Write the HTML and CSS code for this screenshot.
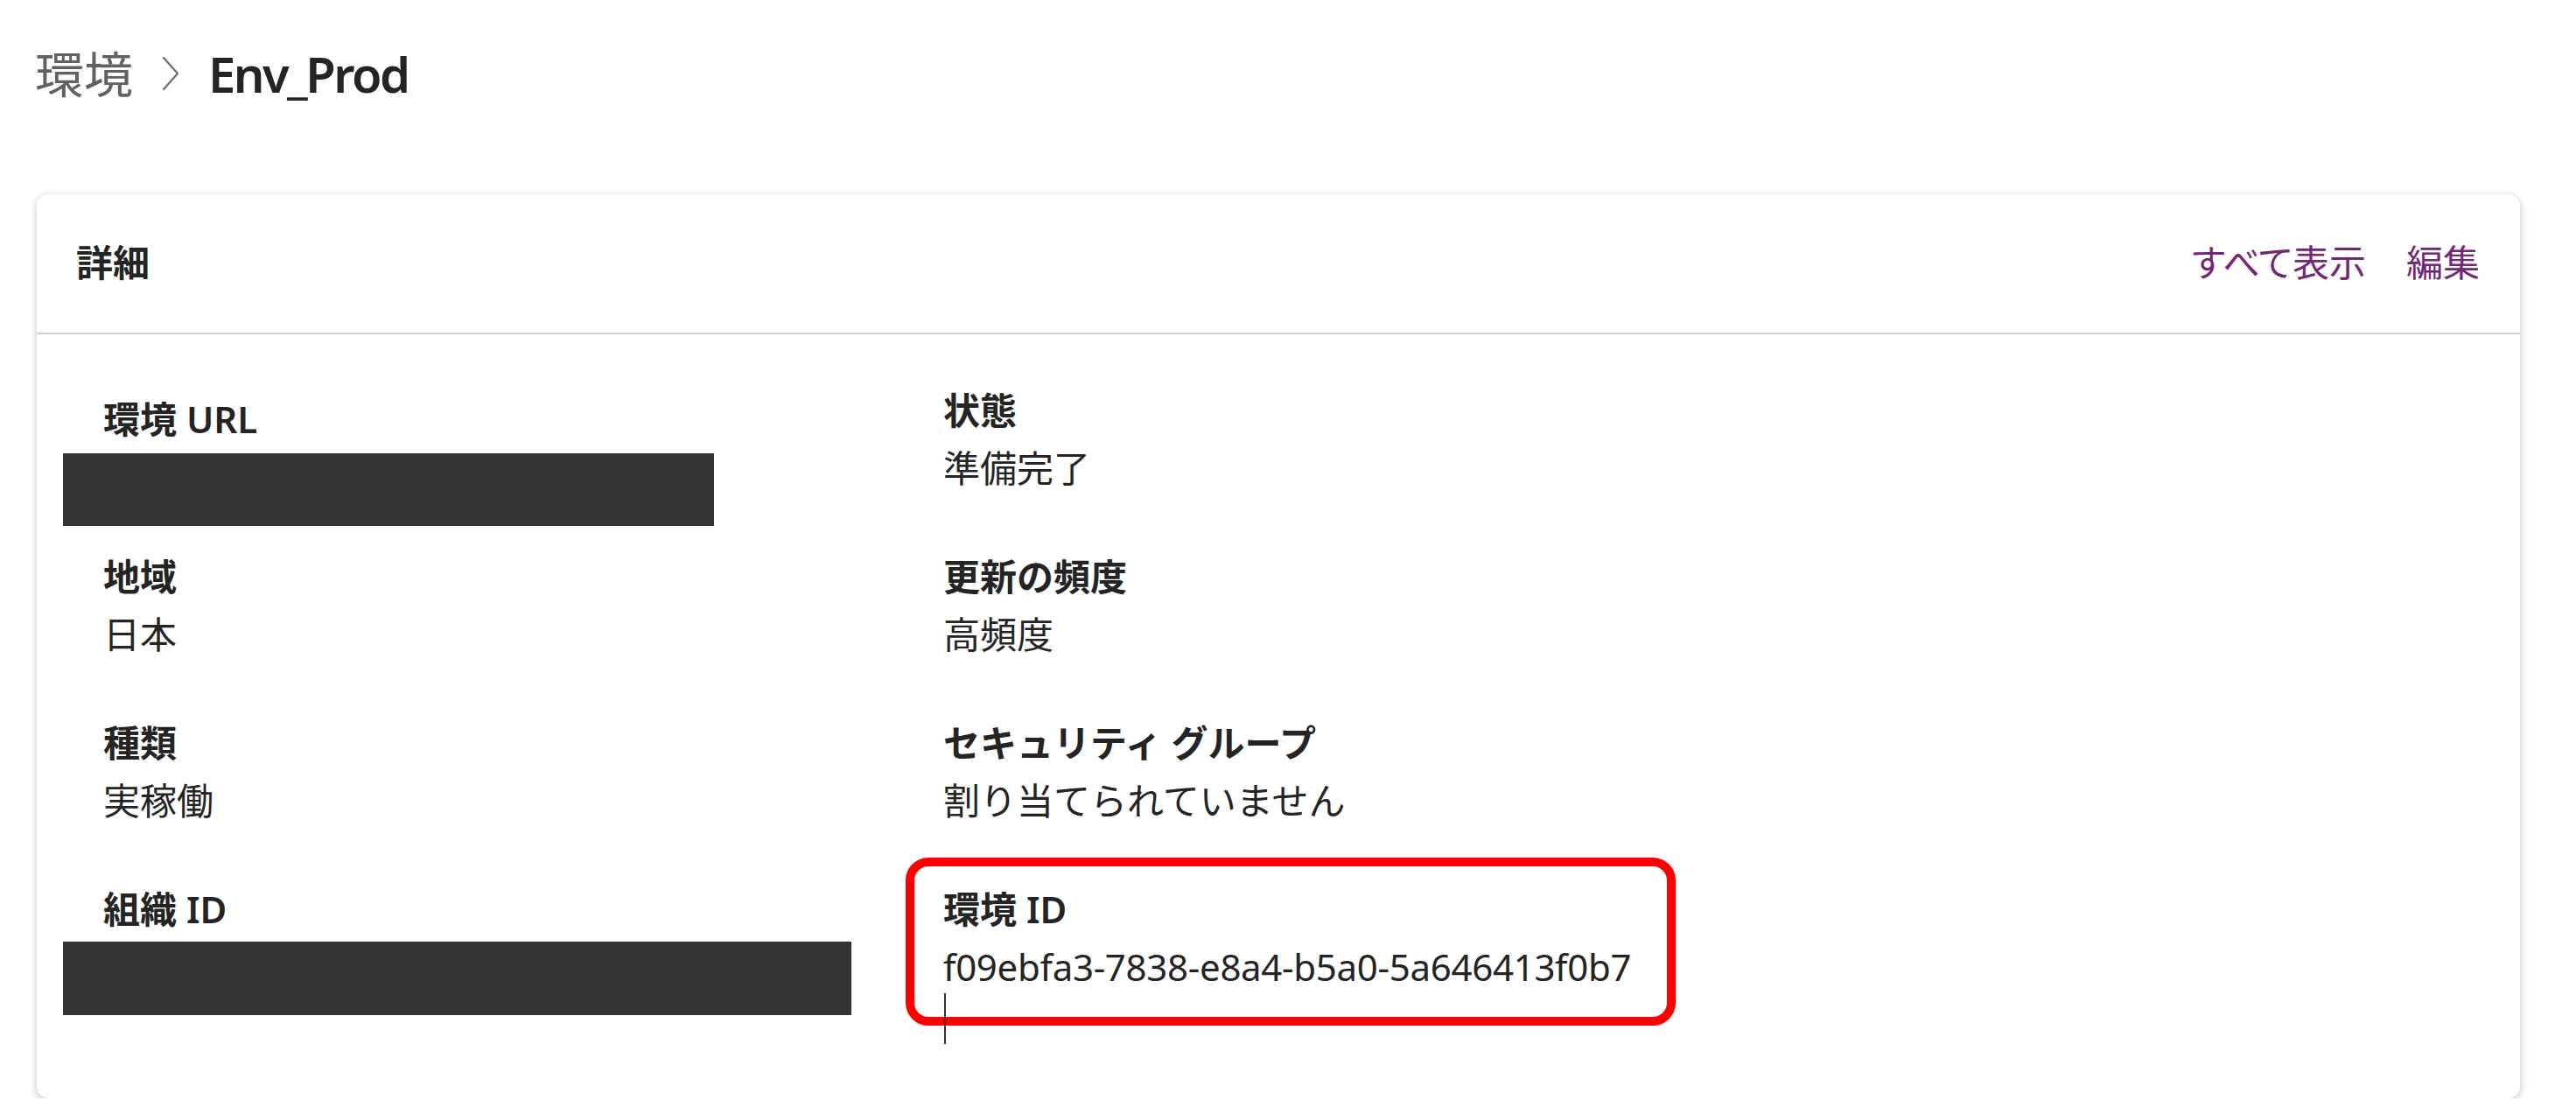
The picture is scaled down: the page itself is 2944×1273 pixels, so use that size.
FILE: index.html
```html
<!DOCTYPE html>
<html lang="ja">
<head>
<meta charset="utf-8">
<title>Env_Prod</title>
<link rel="stylesheet" href="styles.css">
</head>
<body>
<div class="page">
  <nav class="breadcrumb">
    <span class="crumb">環境</span>
    <svg class="chevron" width="22" height="40" viewBox="0 0 22 40" aria-hidden="true"><polyline points="3,2 19,20 3,38" fill="none" stroke="#6b6b6b" stroke-width="2.2" stroke-linecap="round" stroke-linejoin="round"/></svg>
    <span class="crumb-current">Env_Prod</span>
  </nav>

  <section class="card">
    <header class="card-header">
      <h2 class="card-title">詳細</h2>
      <div class="actions">
        <a class="action">すべて表示</a>
        <a class="action">編集</a>
      </div>
    </header>
    <div class="card-body">
      <div class="col">
        <div class="field field-url">
          <div class="label">環境 URL</div>
          <div class="redact redact-url"></div>
        </div>
        <div class="field">
          <div class="label">地域</div>
          <div class="value">日本</div>
        </div>
        <div class="field">
          <div class="label">種類</div>
          <div class="value">実稼働</div>
        </div>
        <div class="field field-last">
          <div class="label">組織 ID</div>
          <div class="redact redact-org"></div>
        </div>
      </div>
      <div class="col">
        <div class="field">
          <div class="label">状態</div>
          <div class="value">準備完了</div>
        </div>
        <div class="field">
          <div class="label">更新の頻度</div>
          <div class="value">高頻度</div>
        </div>
        <div class="field">
          <div class="label">セキュリティ グループ</div>
          <div class="value">割り当てられていません</div>
        </div>
        <div class="field field-last field-envid">
          <div class="label">環境 ID</div>
          <div class="value value-id">f09ebfa3-7838-e8a4-b5a0-5a646413f0b7</div>
          <div class="highlight"></div>
          <div class="caret"></div>
        </div>
      </div>
    </div>
  </section>
</div>
</body>
</html>
```

FILE: styles.css
```css
* {
  box-sizing: border-box;
}

html, body {
  margin: 0;
  padding: 0;
  background: #ffffff;
}

body {
  font-family: "Noto Sans", "Noto Sans CJK JP", sans-serif;
  color: #242424;
}

.page {
  padding: 44px 0 0 42px;
}

.breadcrumb {
  display: flex;
  align-items: center;
  gap: 32px;
  height: 80px;
  font-size: 56px;
  line-height: 80px;
  margin-left: -2px;
}

.crumb {
  color: #616161;
  font-weight: 400;
}

.chevron {
  display: block;
  flex: none;
}

.crumb-current {
  color: #242424;
  font-weight: 600;
  letter-spacing: -2.5px;
}

.card {
  margin-top: 98px;
  width: 2838px;
  background: #ffffff;
  border-radius: 13px;
  box-shadow: 0 0 6px rgba(0, 0, 0, 0.12), 0 6px 12px rgba(0, 0, 0, 0.14);
}

.card-header {
  height: 160px;
  display: flex;
  align-items: center;
  justify-content: space-between;
  padding: 0 46px 2px 45px;
  border-bottom: 2px solid #d1d1d1;
}

.card-title {
  margin: 0;
  font-size: 42px;
  line-height: 60px;
  font-weight: 600;
  color: #242424;
}

.actions {
  display: flex;
  gap: 46px;
}

.action {
  font-size: 42px;
  line-height: 60px;
  color: #742774;
  font-feature-settings: "palt";
  cursor: pointer;
}

.card-body {
  display: grid;
  grid-template-columns: 960px 960px;
  padding: 54px 0 95px 76px;
}

.field {
  position: relative;
  margin-bottom: 58px;
}

.field-last {
  margin-bottom: 0;
}

.field-url {
  padding-top: 10px;
  margin-bottom: 25px;
}

.label {
  font-size: 42px;
  line-height: 66px;
  font-weight: 600;
  color: #242424;
}

.value {
  font-size: 42px;
  line-height: 66px;
  font-weight: 400;
  color: #242424;
}

.value-id {
  letter-spacing: -0.3px;
}

.redact {
  background: #333333;
  margin-left: -46px;
}

.redact-url {
  margin-top: 6px;
  width: 744px;
  height: 83px;
}

.redact-org {
  margin-top: 4px;
  width: 901px;
  height: 84px;
}

.highlight {
  position: absolute;
  left: -43px;
  top: -26px;
  width: 880px;
  height: 192px;
  border: 10px solid #ff0000;
  border-radius: 26px;
  pointer-events: none;
}

.caret {
  position: absolute;
  left: 1px;
  top: 129px;
  width: 2px;
  height: 58px;
  background: #333333;
}
```
